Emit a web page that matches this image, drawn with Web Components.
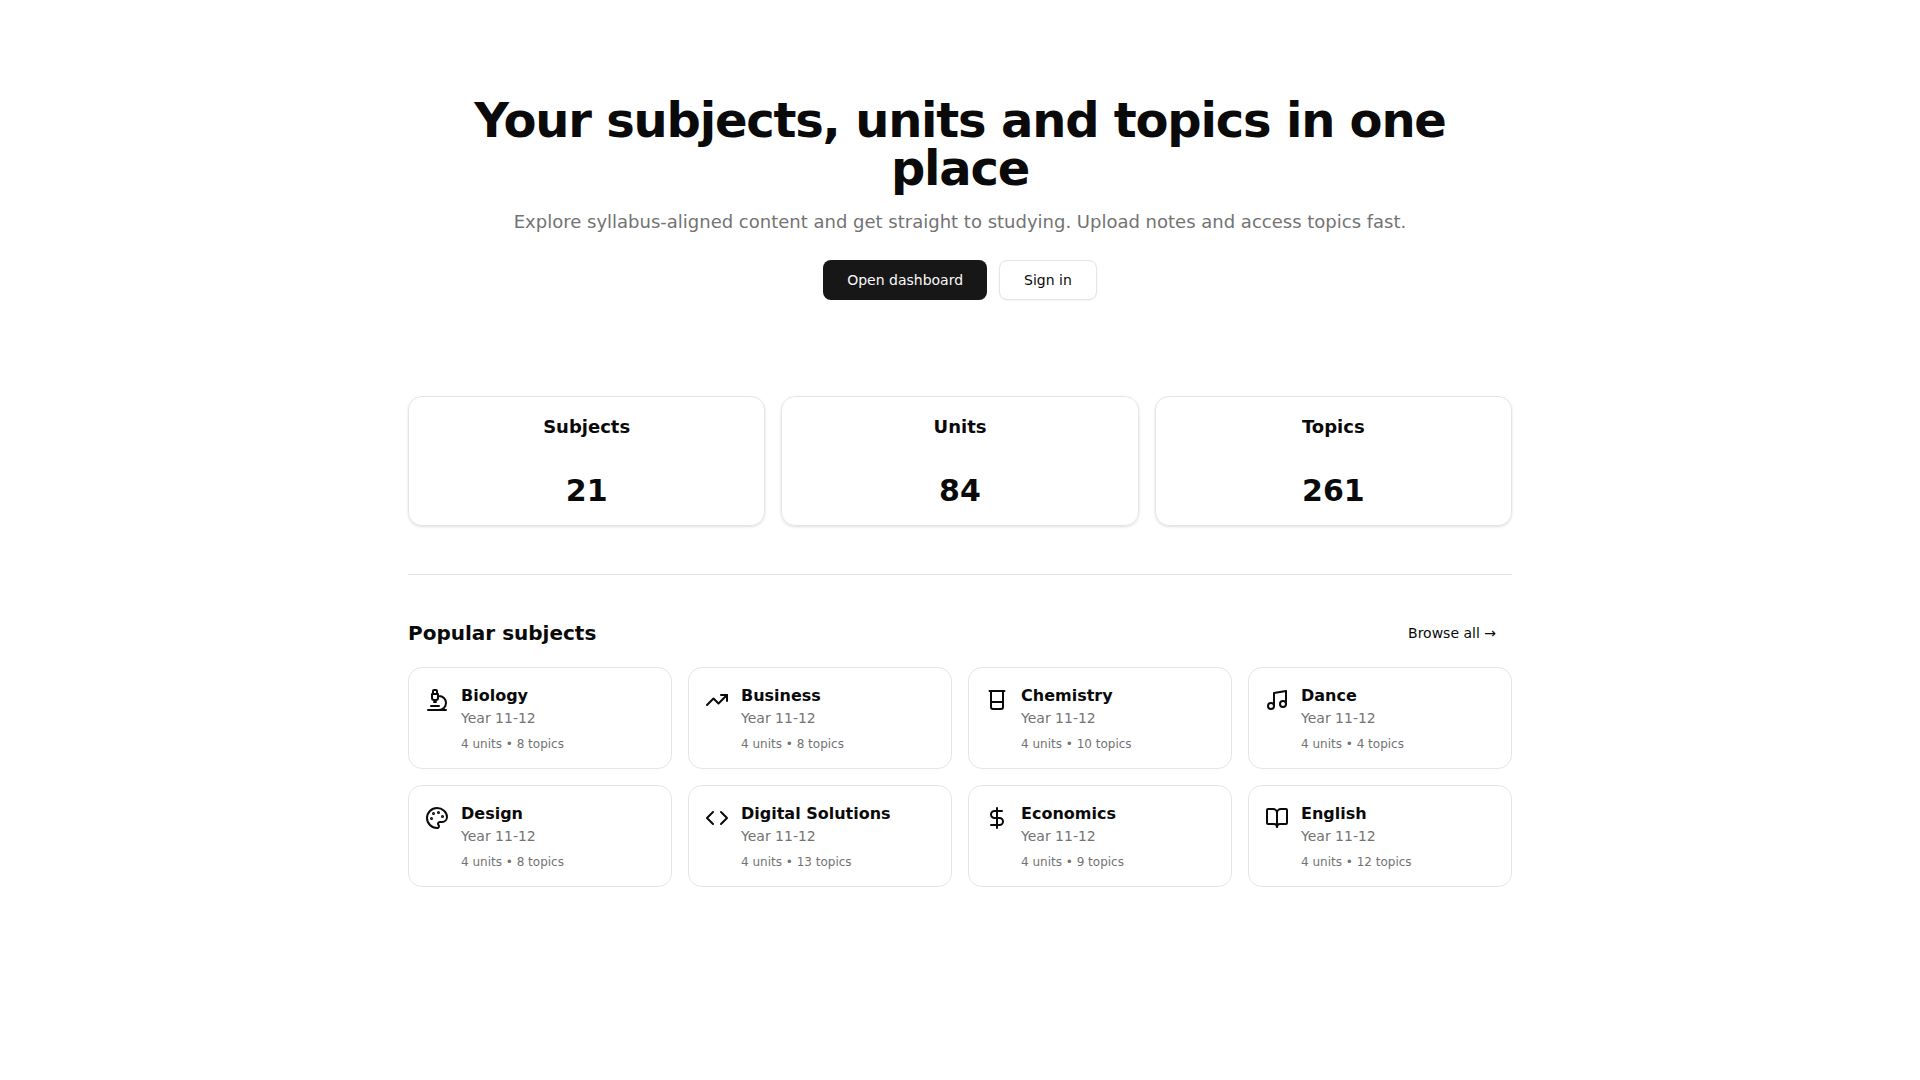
<!DOCTYPE html>
<html lang="en">
<head>
<meta charset="utf-8">
<meta name="viewport" content="width=device-width, initial-scale=1">
<title>Your subjects, units and topics in one place</title>
<style>
  :root {
    --fg: #0a0a0a;
    --muted: #737373;
    --line: #e5e5e5;
    --primary: #171717;
    --on-primary: #fafafa;
  }
  body {
    margin: 0;
    background: #fff;
    color: var(--fg);
    font: 16px/24px "DejaVu Sans", sans-serif;
  }
</style>
</head>
<body>
<study-home></study-home>

<script>
const define = (name, html, setup) => {
  const template = document.createElement('template');
  template.innerHTML = '<style>*{box-sizing:border-box}h1,h2,h3,p{margin:0}</style>' + html;
  customElements.define(name, class extends HTMLElement {
    constructor() {
      super();
      this.attachShadow({ mode: 'open' }).append(template.content.cloneNode(true));
    }
    connectedCallback() {
      if (setup) setup(this, this.shadowRoot);
    }
  });
};

const icons = {
  microscope: '<path d="M6 18h8M3 22h18M14 22a7 7 0 1 0 0-14h-1M9 14h2M9 12a2 2 0 0 1-2-2V6h6v4a2 2 0 0 1-2 2Z"/><path d="M12 6V3a1 1 0 0 0-1-1H9a1 1 0 0 0-1 1v3"/>',
  trend: '<path d="M16 7h6v6"/><path d="m22 7-8.5 8.5-5-5L2 17"/>',
  beaker: '<path d="M4.5 3h15M6 3v16a2 2 0 0 0 2 2h8a2 2 0 0 0 2-2V3M6 14h12"/>',
  music: '<path d="M9 18V5l12-2v13"/><circle cx="6" cy="18" r="3"/><circle cx="18" cy="16" r="3"/>',
  palette: '<path d="M12 22a1 1 0 0 1 0-20 10 9 0 0 1 10 9 5 5 0 0 1-5 5h-2.25a1.75 1.75 0 0 0-1.4 2.8l.3.4a1.75 1.75 0 0 1-1.4 2.8z"/><g fill="currentColor"><circle cx="13.5" cy="6.5" r=".5"/><circle cx="17.5" cy="10.5" r=".5"/><circle cx="6.5" cy="12.5" r=".5"/><circle cx="8.5" cy="7.5" r=".5"/></g>',
  code: '<path d="m16 18 6-6-6-6M8 6l-6 6 6 6"/>',
  dollar: '<path d="M12 2v20M17 5H9.5a3.5 3.5 0 0 0 0 7h5a3.5 3.5 0 0 1 0 7H6"/>',
  book: '<path d="M12 7v14"/><path d="M3 18a1 1 0 0 1-1-1V4a1 1 0 0 1 1-1h5a4 4 0 0 1 4 4 4 4 0 0 1 4-4h5a1 1 0 0 1 1 1v13a1 1 0 0 1-1 1h-6a3 3 0 0 0-3 3 3 3 0 0 0-3-3z"/>'
};

define('line-icon', `
  <style>
    :host { display: block; width: 24px; height: 24px; flex: none; }
    svg { display: block; width: 100%; height: 100%; }
  </style>
  <svg viewBox="0 0 24 24" fill="none" stroke="currentColor" stroke-width="2"
       stroke-linecap="round" stroke-linejoin="round" aria-hidden="true"></svg>
`, (host, root) => {
  root.querySelector('svg').innerHTML = icons[host.getAttribute('name')] || '';
});

define('action-button', `
  <style>
    :host { display: inline-flex; }
    button {
      display: inline-flex; align-items: center; justify-content: center;
      height: 40px; padding: 0 24px; border: 0; border-radius: 8px;
      background: var(--primary); color: var(--on-primary);
      font: 500 14px/20px "DejaVu Sans", sans-serif; cursor: pointer; white-space: nowrap;
    }
    :host([variant="outline"]) button {
      border: 1px solid var(--line); background: #fff; color: var(--fg);
      box-shadow: 0 1px 2px rgb(0 0 0 / 5%);
    }
    :host([variant="ghost"]) button {
      height: 36px; padding: 0 16px; background: none; color: var(--fg);
    }
  </style>
  <button type="button"><slot></slot></button>
`);

define('page-hero', `
  <style>
    :host { display: block; padding: 96px 0; text-align: center; }
    h1 { font-size: 48px; line-height: 48px; font-weight: 700; letter-spacing: -0.025em; }
    p { margin-top: 16px; font-size: 18px; line-height: 28px; color: var(--muted); }
    .actions { display: flex; justify-content: center; gap: 12px; margin-top: 24px; }
  </style>
  <h1><slot name="title"></slot></h1>
  <p><slot name="lead"></slot></p>
  <div class="actions"><slot></slot></div>
`);

define('stat-card', `
  <style>
    :host {
      display: flex; flex-direction: column; gap: 32px; padding: 16px;
      border: 1px solid var(--line); border-radius: 14px; text-align: center;
      box-shadow: 0 1px 3px rgb(0 0 0 / 10%), 0 1px 2px -1px rgb(0 0 0 / 10%);
    }
    h3 { font-size: 18px; line-height: 28px; font-weight: 600; }
    p { font-size: 30px; line-height: 36px; font-weight: 700; }
  </style>
  <h3><slot name="label"></slot></h3>
  <p><slot></slot></p>
`);

define('subject-card', `
  <style>
    :host { display: block; }
    a {
      display: flex; align-items: flex-start; gap: 12px; padding: 16px;
      border: 1px solid var(--line); border-radius: 14px;
      color: inherit; text-decoration: none;
    }
    line-icon { margin-top: 4px; }
    h3 { font-size: 16px; line-height: 24px; font-weight: 600; }
    .year { font-size: 14px; line-height: 20px; color: var(--muted); }
    .count { margin-top: 8px; font-size: 12px; line-height: 16px; color: var(--muted); }
  </style>
  <a href="#">
    <line-icon></line-icon>
    <div>
      <h3><slot></slot></h3>
      <p class="year"><slot name="year">Year 11-12</slot></p>
      <p class="count"><slot name="count"></slot></p>
    </div>
  </a>
`, (host, root) => {
  const icon = root.querySelector('line-icon');
  icon.setAttribute('name', host.getAttribute('icon'));
  icon.connectedCallback();
});

define('subject-section', `
  <style>
    :host { display: block; padding: 40px 0; border-top: 1px solid var(--line); }
    header { display: flex; align-items: center; justify-content: space-between; margin-bottom: 16px; }
    h2 { font-size: 20px; line-height: 28px; font-weight: 600; }
    .grid { display: grid; grid-template-columns: repeat(4, minmax(0, 1fr)); gap: 16px; }
    @media (max-width: 1000px) { .grid { grid-template-columns: repeat(2, minmax(0, 1fr)); } }
    @media (max-width: 560px) { .grid { grid-template-columns: 1fr; } }
  </style>
  <header>
    <h2><slot name="title"></slot></h2>
    <slot name="action"></slot>
  </header>
  <div class="grid"><slot></slot></div>
`);

define('study-home', `
  <style>
    :host { display: block; }
    main { max-width: 1152px; margin: 0 auto; padding: 0 24px; }
    .stats { display: grid; grid-template-columns: repeat(3, minmax(0, 1fr)); gap: 16px; margin-bottom: 48px; }
    @media (max-width: 640px) { .stats { grid-template-columns: 1fr; } }
  </style>
  <main>
    <page-hero>
      <span slot="title">Your subjects, units and topics in one place</span>
      <span slot="lead">Explore syllabus-aligned content and get straight to studying. Upload notes and access topics fast.</span>
      <action-button>Open dashboard</action-button>
      <action-button variant="outline">Sign in</action-button>
    </page-hero>
    <section class="stats">
      <stat-card><span slot="label">Subjects</span>21</stat-card>
      <stat-card><span slot="label">Units</span>84</stat-card>
      <stat-card><span slot="label">Topics</span>261</stat-card>
    </section>
    <subject-section>
      <span slot="title">Popular subjects</span>
      <action-button slot="action" variant="ghost">Browse all →</action-button>
      <subject-card icon="microscope">Biology<span slot="count">4 units • 8 topics</span></subject-card>
      <subject-card icon="trend">Business<span slot="count">4 units • 8 topics</span></subject-card>
      <subject-card icon="beaker">Chemistry<span slot="count">4 units • 10 topics</span></subject-card>
      <subject-card icon="music">Dance<span slot="count">4 units • 4 topics</span></subject-card>
      <subject-card icon="palette">Design<span slot="count">4 units • 8 topics</span></subject-card>
      <subject-card icon="code">Digital Solutions<span slot="count">4 units • 13 topics</span></subject-card>
      <subject-card icon="dollar">Economics<span slot="count">4 units • 9 topics</span></subject-card>
      <subject-card icon="book">English<span slot="count">4 units • 12 topics</span></subject-card>
    </subject-section>
  </main>
`);
</script>
</body>
</html>
